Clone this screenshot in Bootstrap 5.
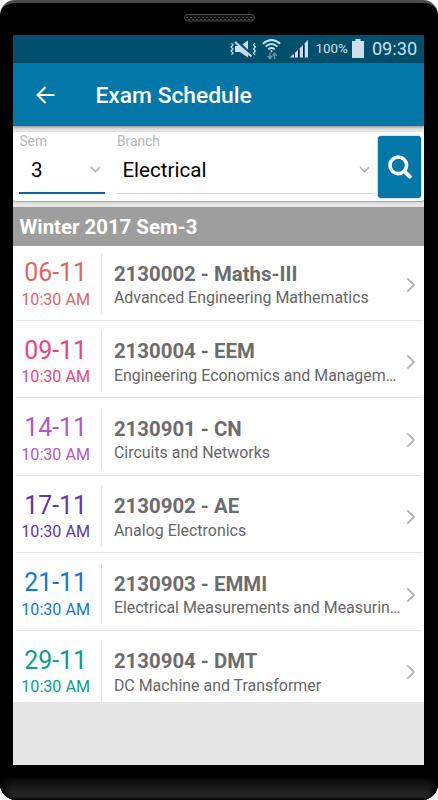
<!DOCTYPE html>
<html lang="en">
<head>
<meta charset="utf-8">
<meta name="viewport" content="width=device-width, initial-scale=1">
<title>Exam Schedule</title>
<link href="https://cdn.jsdelivr.net/npm/bootstrap@5.3.0/dist/css/bootstrap.min.css" rel="stylesheet">
<style>
body{font-family:Roboto,"Liberation Sans",sans-serif;background:#fff;overflow:hidden}
svg{display:block;flex:none}
.phone{width:438px;height:800px;background:#000;border-radius:15px 15px 16px 16px;overflow:hidden;border-top:3px solid #4a4a4a}
.earpiece{height:32px;padding-top:11px}
.screen{width:411px;height:730px;margin-left:13.4px;background:#e6e6e6}
.chin{height:22px;margin-top:13px;background:linear-gradient(#0c0c0c,#2a2a2a 85%,#050505);box-shadow:inset 8px 0 8px -3px #000,inset -8px 0 8px -3px #000}
.status{height:27.5px;background:#004f6d;color:#cfdfe7;padding-right:7px}
.wifi{margin-left:5px}
.bars{margin-left:8.5px}
.status .pct{font-size:13.4px;margin-left:6.5px;width:33px}
.status .clock{font-size:18.2px;margin-left:7.5px;width:45.5px}
.appbar{height:63.5px;background:#0277a8;box-shadow:0 1px 3px rgba(0,0,0,.45);padding-left:22.8px}
.appbar svg{margin-top:1px}
.appbar h1{font-size:22.8px;font-weight:500;margin-left:40.3px;line-height:26px;padding-top:3px}
.search{height:69px;margin:6px 0 6px;border-radius:3px;box-shadow:0 1px 2px rgba(0,0,0,.35);padding:4px 3px 4px 6px}
.picker{height:57.5px;border-bottom:1px solid #d8d8d8}
.picker.active{height:58px;border-bottom:2px solid #0565a6}
.picker small{font-size:13.8px;line-height:16px;height:16px;color:#b9b9b9;margin-top:-3px}
.picker .val{font-size:20.6px;line-height:24px;color:#000;padding:9px 5px 0 5.5px}
.picker.active .val{padding:9px 4px 0 11.5px}
.sem{width:86px;margin-right:11.5px}
.find{width:43px;height:62px;border-radius:3px;background:#0277a8;box-shadow:0 0 2px rgba(2,80,120,.6);margin-left:3.5px}
.term{height:39px;background:#9e9e9e;font-size:20.4px;font-weight:700;line-height:41px;padding-left:6px}
.exam{height:77.5px;margin:0 2.5px;padding:10.5px 0 5.5px;border-bottom:1px solid #e5e5e5}
.exam:first-child{height:74.5px;padding-top:7.5px}
.exam:last-child{height:71px;padding-bottom:0;border:0}
.exam>svg{margin-left:1.8px;margin-top:2px}
.when{width:86.5px;border-right:1px solid #e4e4e4;padding-right:6px}
.when b{font-weight:400;font-size:24.9px;line-height:28px;padding-top:5.5px}
.when span{font-size:16.1px;line-height:20px;padding-top:2.7px}
.what{padding-left:11.5px;width:302px}
.what b{font-weight:700;font-size:20.4px;line-height:24px;padding-top:8px;color:#6c6c6c}
.what span{font-size:15.95px;line-height:20px;padding-top:2.5px;height:24px;color:#666}
.c1{color:#e26463}.c2{color:#ec4380}.c3{color:#b358c8}.c4{color:#6135b5}.c5{color:#1479d2}.c6{color:#0aa08c}
</style>
<script src="https://cdn.jsdelivr.net/npm/bootstrap@5.3.0/dist/js/bootstrap.bundle.min.js"></script>
</head>
<body>
<svg width="0" height="0" class="position-absolute"><defs>
<pattern id="mesh" width="4" height="4" patternUnits="userSpaceOnUse"><path d="M0 1h2v1H0zM2 3h2v1H2z" fill="#4d4d4d"/></pattern>
<symbol id="next" viewBox="0 0 10 16"><path d="M1.3 1.3 8 8l-6.700 6.700" fill="none" stroke="#b5b5b5" stroke-width="1.900"/></symbol>
<symbol id="down" viewBox="0 0 11 8"><path d="M1 1.200 5.500 5.800 10 1.200" fill="none" stroke="#b5b5b5" stroke-width="1.700"/></symbol>
</defs></svg>
<div class="phone">
  <div class="earpiece d-flex justify-content-center">
    <svg width="71" height="8"><rect x=".5" y=".5" width="70" height="6.500" rx="3.200" fill="#111" stroke="#4b4b4b"/><rect x="2" y="2" width="67" height="4" fill="url(#mesh)"/></svg>
  </div>
  <main class="screen">
    <div class="status d-flex align-items-center justify-content-end text-nowrap">
      <svg width="27" height="20" viewBox="0 0 27 20" fill="none" stroke="#cfdfe7"><path d="M5 7h5l8-5.500v17L10 13H5z" fill="#cfdfe7" stroke="none"/><path d="M6 1.500 22 17" stroke="#004f6d" stroke-width="3.500"/><path d="M5 3 21.500 17.500" stroke-width="1.800"/><path d="m1.500 4 1.500 2-2 2 2 2-2 2 2 2-1.500 2M25 4l-1.500 2 2 2-2 2 2 2-2 2 1.500 2" stroke-width="1.200"/></svg>
      <svg class="wifi" width="19" height="22" viewBox="0 0 19 22" fill="none" stroke="#cfdfe7" stroke-width="1.900"><path d="M.8 5.800Q9.500-1.800 18.200 5.800M3.600 8.600q5.900-5 11.800 0M6.300 11.300q3.200-2.500 6.400 0"/><circle cx="9.500" cy="13.300" r="1" fill="#cfdfe7" stroke="none"/><path d="M8 14.500v6M5.800 18l2.200 2.500 2.200-2.500M12.500 21v-5.500M10.700 17.500l1.800-2.200 2.200 2.200" stroke="#6993a5" stroke-width="1.500"/></svg>
      <svg class="bars" width="19" height="19" viewBox="0 0 19 19" fill="#cfdfe7"><path d="M0 18.500 4 14.700v3.800zM5 18.500v-4.800l3-2.900v7.700zM9.500 18.500V9.400l3.500-3.500v12.600zM14.500 18.500V4.500l3.500-3.500v17.500z"/><path d="M4 14.700h1v3.800H4zM8 10.800h1.500v7.700H8zM13 6h1.500v12.500H13z" fill="#001c68"/></svg>
      <span class="pct">100%</span>
      <svg width="12" height="19" viewBox="0 0 12 19" class="ms-1" fill="#cfdfe7"><path d="M3.500 0h5v2H12v17H0V2h3.500z"/></svg>
      <span class="clock">09:30</span>
    </div>
    <header class="appbar d-flex align-items-center text-white position-relative">
      <svg width="19" height="18" viewBox="0 0 19 18" fill="none" stroke="#fff" stroke-width="2.100"><path d="M9.500.9 1.600 9l7.900 8.100M1.600 9h16.900"/></svg>
      <h1 class="mb-0">Exam Schedule</h1>
    </header>
    <section class="search bg-white d-flex">
      <div class="picker active sem d-flex flex-column">
        <small>Sem</small>
        <div class="val d-flex align-items-center justify-content-between"><span>3</span><svg width="11" height="8"><use href="#down"/></svg></div>
      </div>
      <div class="picker flex-grow-1 d-flex flex-column">
        <small>Branch</small>
        <div class="val d-flex align-items-center justify-content-between"><span>Electrical</span><svg width="11" height="8"><use href="#down"/></svg></div>
      </div>
      <button class="btn p-0 border-0 find d-flex align-items-center justify-content-center" aria-label="Search">
        <svg width="24" height="24" viewBox="0 0 24 24" fill="none" stroke="#fff"><circle cx="10.300" cy="10.300" r="8.300" stroke-width="3.600"/><path d="m16.500 16.500 5.200 5.200" stroke-width="4" stroke-linecap="round"/></svg>
      </button>
    </section>
    <h2 class="term text-white mb-0">Winter 2017 Sem-3</h2>
    <div class="bg-white text-nowrap">
      <article class="exam d-flex"><div class="when d-flex flex-column align-items-center c1"><b>06-11</b><span>10:30 AM</span></div><div class="what"><b class="d-block">2130002 - Maths-III</b><span class="d-block">Advanced Engineering Mathematics</span></div><svg width="10" height="16" class="align-self-center"><use href="#next"/></svg></article>
      <article class="exam d-flex"><div class="when d-flex flex-column align-items-center c2"><b>09-11</b><span>10:30 AM</span></div><div class="what"><b class="d-block">2130004 - EEM</b><span class="d-block">Engineering Economics and Managem…</span></div><svg width="10" height="16" class="align-self-center"><use href="#next"/></svg></article>
      <article class="exam d-flex"><div class="when d-flex flex-column align-items-center c3"><b>14-11</b><span>10:30 AM</span></div><div class="what"><b class="d-block">2130901 - CN</b><span class="d-block">Circuits and Networks</span></div><svg width="10" height="16" class="align-self-center"><use href="#next"/></svg></article>
      <article class="exam d-flex"><div class="when d-flex flex-column align-items-center c4"><b>17-11</b><span>10:30 AM</span></div><div class="what"><b class="d-block">2130902 - AE</b><span class="d-block">Analog Electronics</span></div><svg width="10" height="16" class="align-self-center"><use href="#next"/></svg></article>
      <article class="exam d-flex"><div class="when d-flex flex-column align-items-center c5"><b>21-11</b><span>10:30 AM</span></div><div class="what"><b class="d-block">2130903 - EMMI</b><span class="d-block">Electrical Measurements and Measurin…</span></div><svg width="10" height="16" class="align-self-center"><use href="#next"/></svg></article>
      <article class="exam d-flex"><div class="when d-flex flex-column align-items-center c6"><b>29-11</b><span>10:30 AM</span></div><div class="what"><b class="d-block">2130904 - DMT</b><span class="d-block">DC Machine and Transformer</span></div><svg width="10" height="16" class="align-self-center"><use href="#next"/></svg></article>
    </div>
  </main>
  <div class="chin"></div>
</div>
</body>
</html>
